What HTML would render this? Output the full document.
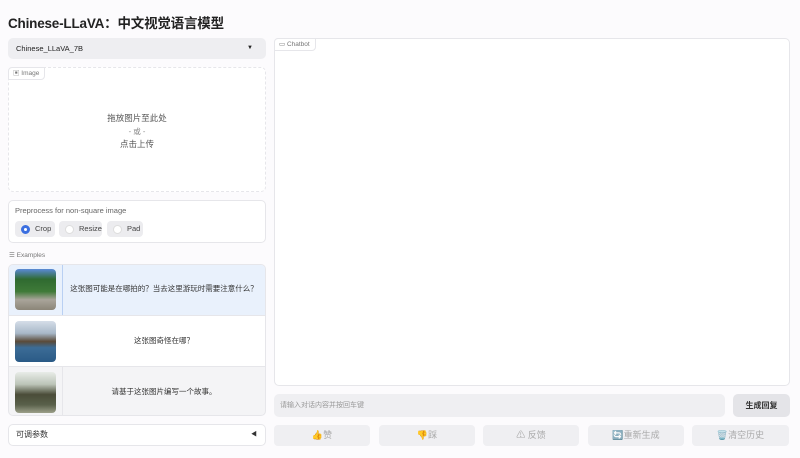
<!DOCTYPE html><html><head><style>
*{box-sizing:border-box;margin:0;padding:0}
body{width:800px;height:458px;background:#fcfbfd;font-family:"Liberation Sans","Noto Sans CJK SC",sans-serif;position:relative;overflow:hidden;color:#333}
.a{position:absolute}
.box{position:absolute;border:1px solid #e6e6ea;border-radius:5px;background:#fff}
.tag{position:absolute;left:-1px;top:-1px;height:13px;padding:0 5px 0 4px;border:1px solid #e6e6ea;border-radius:4px 0 4px 0;font-size:6.5px;color:#777;line-height:12px;background:#fff}
.btn{position:absolute;top:425px;height:21px;width:96px;background:#efeff2;border-radius:4px;font-size:9px;color:#aaa;text-align:center;line-height:21px}
.r{position:absolute;top:221px;height:16px;background:#ececef;border-radius:4px;font-size:7.5px;color:#444;line-height:16px;padding-left:20px}
.r i{position:absolute;left:6px;top:3.5px;width:9px;height:9px;border-radius:50%;background:#fff;border:1px solid #ddd}
.row{position:absolute;left:0;width:256px;height:51px;border-top:1px solid #e6e6ea;font-size:7.5px;color:#333;line-height:50px}
.row .t{position:absolute;left:54px;right:0;text-align:center}
.th{position:absolute;left:6px;top:5px;width:41px;height:41px;border-radius:4px}
</style></head><body>
<div class="a" style="left:8px;top:12px;font-size:13.5px;font-weight:bold;color:#222;letter-spacing:-0.2px">Chinese-LLaVA：中文视觉语言模型</div>
<div class="a" style="left:8px;top:38px;width:258px;height:21px;background:#eeeef1;border-radius:5px;font-size:7.5px;line-height:21px;padding-left:8px;color:#222">Chinese_LLaVA_7B<span class="a" style="right:13px;top:0;font-size:6px">▼</span></div>
<div class="box" style="left:8px;top:67px;width:258px;height:125px;border-style:dashed"><div class="tag">▣ Image</div>
<div class="a" style="left:0;right:0;top:44px;text-align:center;font-size:8.5px;color:#555;line-height:12.5px">拖放图片至此处<br><span style="color:#888;font-size:7.5px">- 或 -</span><br>点击上传</div></div>
<div class="box" style="left:8px;top:200px;width:258px;height:43px"></div>
<div class="a" style="left:15px;top:206px;font-size:7.5px;color:#666">Preprocess for non-square image</div>
<div class="r" style="left:15px;width:40px"><i style="border:3px solid #3b6fe0"></i>Crop</div>
<div class="r" style="left:59px;width:43px"><i></i>Resize</div>
<div class="r" style="left:107px;width:36px"><i></i>Pad</div>
<div class="a" style="left:9px;top:251px;font-size:6.5px;color:#777">☰ Examples</div>
<div class="box" style="left:8px;top:264px;width:258px;height:152px;overflow:hidden;background:#f4f4f6">
<div class="a" style="left:53px;top:0;bottom:0;width:1px;background:#e6e6ea"></div>
<div class="row" style="top:-1px;background:#e9f1fc;border-top:none"><div class="a" style="left:53px;top:0;width:1px;height:51px;background:#b9d0f3"></div><div class="th" style="background:linear-gradient(#5a8ad6 0,#2f6a30 25%,#3f7a38 55%,#a9a49a 75%,#8b8578)"></div><div class="t">这张图可能是在哪拍的？当去这里游玩时需要注意什么？</div></div>
<div class="row" style="top:50px;background:#fff"><div class="th" style="background:linear-gradient(#d5dde8 0,#a8b8c8 30%,#5a4a38 50%,#3c6c96 65%,#2a5a86)"></div><div class="t">这张图奇怪在哪？</div></div>
<div class="row" style="top:101px"><div class="th" style="background:linear-gradient(#e8ece8 0,#bcc4b8 30%,#4a4c38 55%,#59604a 80%,#9ca08a)"></div><div class="t">请基于这张图片编写一个故事。</div></div>
</div>
<div class="box" style="left:8px;top:424px;width:258px;height:22px;font-size:8px;line-height:20px;padding-left:7px;color:#333">可调参数<span class="a" style="right:8px;top:0;font-size:6px">◀</span></div>
<div class="box" style="left:274px;top:38px;width:516px;height:348px"><div class="tag">▭ Chatbot</div></div>
<div class="a" style="left:274px;top:394px;width:451px;height:23px;background:#efeff2;border-radius:5px;font-size:7px;color:#999;line-height:23px;padding-left:6px">请输入对话内容并按回车键</div>
<div class="a" style="left:733px;top:394px;width:57px;height:23px;background:#e4e4e8;border-radius:5px;font-size:8px;font-weight:bold;color:#333;line-height:23px;text-align:center">生成回复</div>
<div class="btn" style="left:274px"><span style="color:#f0c050">👍</span>赞</div>
<div class="btn" style="left:379px"><span style="color:#f0c050">👎</span>踩</div>
<div class="btn" style="left:483px">⚠ 反馈</div>
<div class="btn" style="left:588px">🔄重新生成</div>
<div class="btn" style="left:692px;width:97px">🗑️清空历史</div>
</body></html>
